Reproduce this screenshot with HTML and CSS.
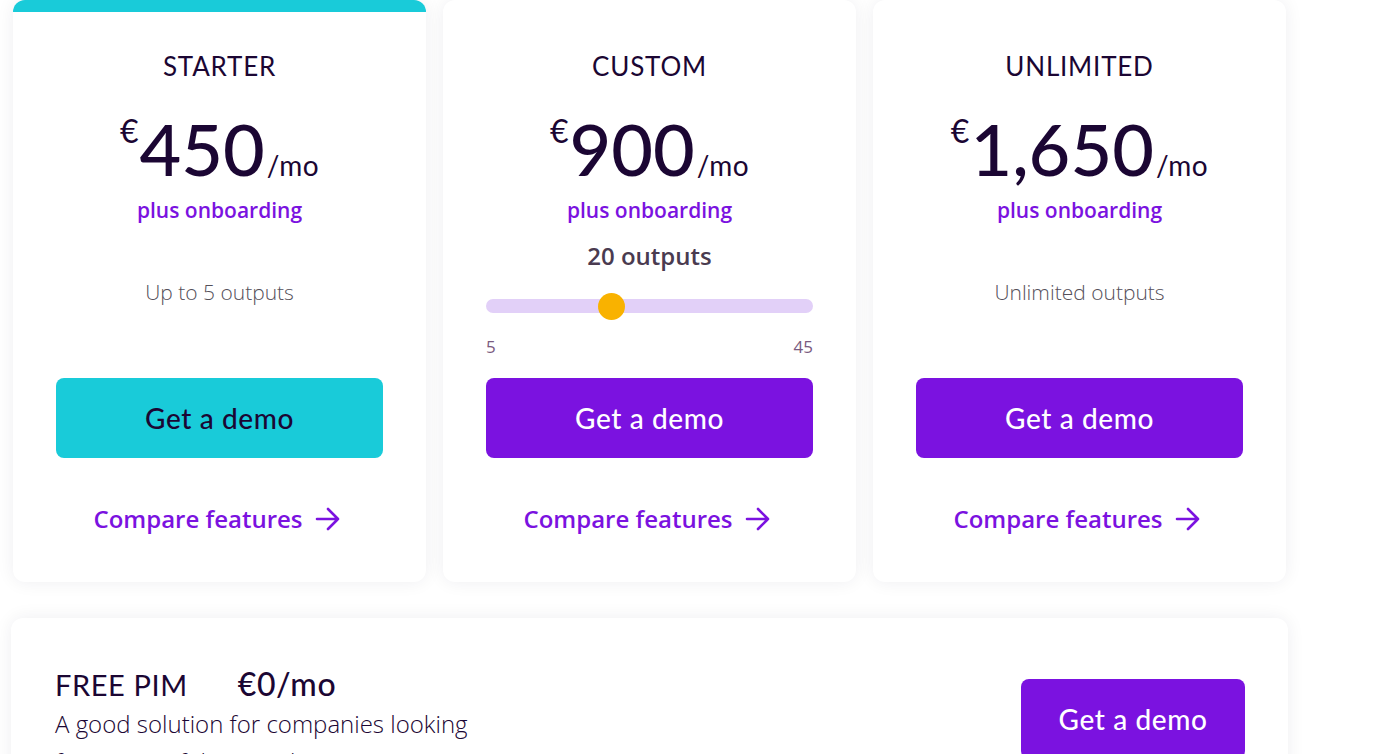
FILE: index.html
```html
<!DOCTYPE html>
<html lang="en">
<head>
<meta charset="utf-8">
<title>Pricing</title>
<link rel="stylesheet" href="styles.css">
</head>
<body>
<div class="page">
  <div class="plans">
    <div class="card card-featured">
      <div class="plan-name">STARTER</div>
      <div class="price"><span class="cur">€</span><span class="amount">450</span><span class="per">/mo</span></div>
      <div class="onboard">plus onboarding</div>
      <div class="middle"><div class="outputs">Up to 5 outputs</div></div>
      <a class="btn btn-teal" href="#">Get a demo</a>
      <a class="compare" href="#">Compare features <svg class="arrow" width="26" height="24" viewBox="0 0 26 24" fill="none" stroke="currentColor" stroke-width="2.6" stroke-linecap="round" stroke-linejoin="round"><path d="M2 12h21M13 2l10 10-10 10"/></svg></a>
    </div>
    <div class="card">
      <div class="plan-name">CUSTOM</div>
      <div class="price"><span class="cur">€</span><span class="amount">900</span><span class="per">/mo</span></div>
      <div class="onboard">plus onboarding</div>
      <div class="middle">
        <div class="count">20 outputs</div>
        <div class="slider">
          <div class="track"></div>
          <div class="thumb" style="left: 112px"></div>
        </div>
        <div class="range-labels"><span>5</span><span>45</span></div>
      </div>
      <a class="btn btn-purple" href="#">Get a demo</a>
      <a class="compare" href="#">Compare features <svg class="arrow" width="26" height="24" viewBox="0 0 26 24" fill="none" stroke="currentColor" stroke-width="2.6" stroke-linecap="round" stroke-linejoin="round"><path d="M2 12h21M13 2l10 10-10 10"/></svg></a>
    </div>
    <div class="card">
      <div class="plan-name">UNLIMITED</div>
      <div class="price"><span class="cur">€</span><span class="amount">1,650</span><span class="per">/mo</span></div>
      <div class="onboard">plus onboarding</div>
      <div class="middle"><div class="outputs">Unlimited outputs</div></div>
      <a class="btn btn-purple" href="#">Get a demo</a>
      <a class="compare" href="#">Compare features <svg class="arrow" width="26" height="24" viewBox="0 0 26 24" fill="none" stroke="currentColor" stroke-width="2.6" stroke-linecap="round" stroke-linejoin="round"><path d="M2 12h21M13 2l10 10-10 10"/></svg></a>
    </div>
  </div>
  <div class="free-card">
    <div class="free-info">
      <div class="free-head"><span class="free-name">FREE PIM</span><span class="free-price">€0/mo</span></div>
      <p class="free-desc">A good solution for companies looking for a powerful PIM without a contract.</p>
    </div>
    <a class="btn btn-purple btn-free" href="#">Get a demo</a>
  </div>
</div>
</body>
</html>
```
FILE: styles.css
```css
* { box-sizing: border-box; }
html, body { margin: 0; padding: 0; background: #ffffff; overflow: hidden; }
body { font-family: "Lato", "Open Sans", sans-serif; color: #1b0633; }
a { text-decoration: none; }

.page { padding: 0 0 0 11px; }

.plans {
  display: grid;
  grid-template-columns: repeat(3, 413px);
  gap: 17px;
  margin-left: 2px;
}

.card {
  background: #fff;
  border-top: 12px solid #fff;
  border-radius: 12px;
  box-shadow: 0 0 18px rgba(30, 10, 60, 0.07);
  padding: 38px 43px 47px;
  display: flex;
  flex-direction: column;
  align-items: stretch;
  text-align: center;
}
.card-featured { border-top-color: #19cbd9; }

.plan-name {
  font-size: 26px;
  line-height: 32px;
  font-weight: 400;
  letter-spacing: 0.8px;
}

.price {
  margin-top: 18px;
  line-height: 96px;
  height: 96px;
  white-space: nowrap;
}
.amount { font-size: 72px; font-weight: 500; }
.cur { font-size: 32px; line-height: 32px; vertical-align: 33px; margin-right: 1px; }
.per { font-size: 28px; letter-spacing: 0.5px; margin-left: 2px; }

.onboard {
  font-family: "Open Sans", sans-serif;
  font-weight: 600;
  font-size: 21px;
  line-height: 28px;
  color: #7b12e0;
}

.middle { height: 154px; }

.outputs {
  margin-top: 54px;
  font-family: "Open Sans", sans-serif;
  font-weight: 300;
  font-size: 21px;
  line-height: 28px;
  color: #55505a;
}

.count {
  margin-top: 16px;
  font-family: "Open Sans", sans-serif;
  font-weight: 600;
  font-size: 24px;
  line-height: 32px;
  color: #4a3b50;
}
.slider { position: relative; margin-top: 27px; height: 14px; }
.track { height: 14px; border-radius: 7px; background: #e2d0f8; }
.thumb {
  position: absolute;
  top: -6px;
  width: 27px;
  height: 27px;
  border-radius: 50%;
  background: #f9b200;
}
.range-labels {
  margin-top: 23px;
  display: flex;
  justify-content: space-between;
  font-family: "Open Sans", sans-serif;
  font-weight: 400;
  font-size: 17px;
  line-height: 22px;
  color: #7a5a80;
}

.btn {
  display: flex;
  align-items: center;
  justify-content: center;
  height: 80px;
  border-radius: 8px;
  font-size: 28px;
  font-weight: 500;
  letter-spacing: 0.6px;
}
.btn-teal { background: #19cbd9; color: #1b0633; }
.btn-purple { background: #7b12e0; color: #fff; }

.compare {
  margin-top: 45px;
  display: flex;
  align-items: center;
  justify-content: center;
  gap: 12px;
  font-family: "Open Sans", sans-serif;
  font-weight: 600;
  font-size: 24px;
  line-height: 32px;
  color: #7b12e0;
  margin-left: -5px;
}
.arrow { display: block; }

.free-card {
  margin-top: 36px;
  width: 1277px;
  background: #fff;
  border-radius: 12px;
  box-shadow: 0 0 18px rgba(30, 10, 60, 0.07);
  padding: 46px 43px 40px 44px;
  display: flex;
  justify-content: space-between;
  align-items: flex-start;
}
.free-head { display: flex; align-items: baseline; gap: 50px; }
.free-name { font-size: 29px; line-height: 40px; font-weight: 400; letter-spacing: 0.6px; }
.free-price { font-size: 32px; line-height: 40px; font-weight: 500; letter-spacing: 0.6px; }
.free-desc {
  margin: 0;
  width: 430px;
  font-family: "Open Sans", sans-serif;
  font-weight: 300;
  font-size: 24px;
  line-height: 38px;
  color: #1b0633;
}
.btn-free { width: 224px; margin-top: 15px; }
```
